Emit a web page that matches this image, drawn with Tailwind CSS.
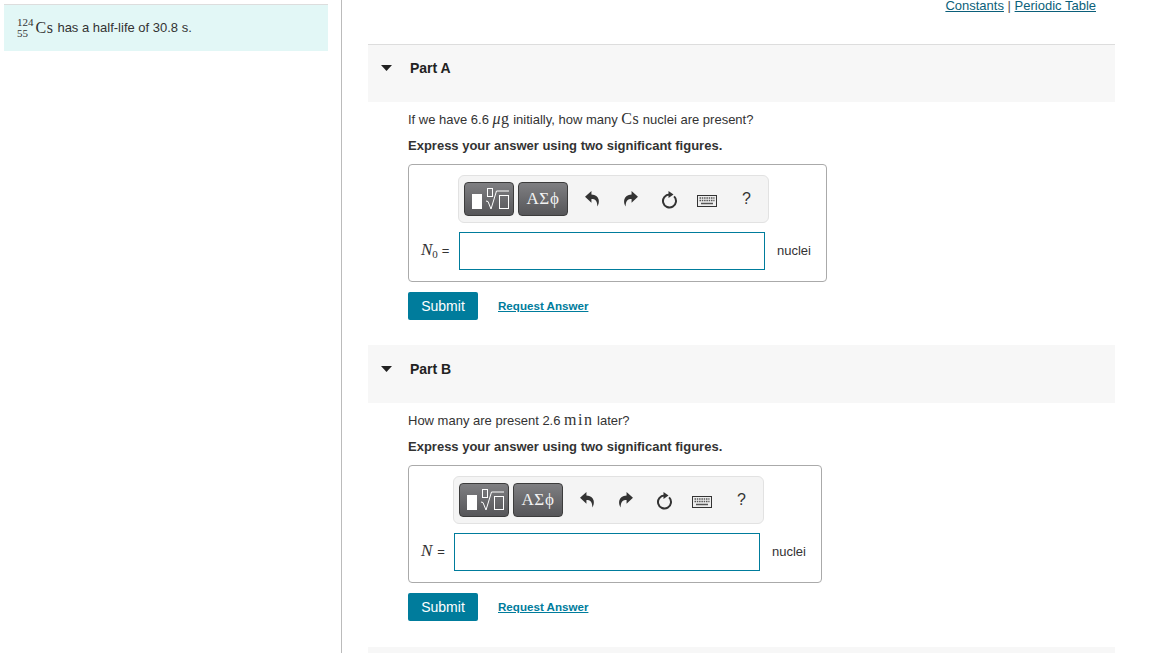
<!DOCTYPE html>
<html>
<head>
<meta charset="utf-8">
<script src="https://cdn.jsdelivr.net/npm/@tailwindcss/browser@4"></script>
</head>
<body class="bg-white">
<div class="flex h-[653px] w-[1166px] overflow-hidden bg-white font-['Liberation_Sans',Arial,sans-serif] text-[13px] text-[#333]">
  <aside class="w-[342px] shrink-0 border-r border-[#bbb] pt-[4px] pl-[4px]">
    <div class="flex h-[47px] w-[324px] items-center border-t border-[#ddd] bg-[#e2f7f6] pl-[13px]">
      <span class="mr-[2px] inline-flex flex-col items-start font-['Liberation_Serif',serif] text-[11px] leading-[11px] text-[#333]"><span>124</span><span>55</span></span>
      <span class="font-['Liberation_Serif',serif] text-[16px] tracking-[.5px]">Cs</span><span class="ml-[4px]">has a half-life of 30.8 s.</span>
    </div>
  </aside>
  <main class="w-[773px] shrink-0 pl-[26px]">
    <div class="flex h-[44px] w-[747px] items-start justify-end pr-[19px]">
      <div class="leading-[11px]"><a class="text-[#0b5f7a] underline">Constants</a> <span class="text-[#555]">|</span> <a class="text-[#0b5f7a] underline">Periodic Table</a></div>
    </div>

    <section>
      <div class="h-[58px] w-[747px] border-t border-[#ddd] bg-[#f7f7f7]">
        <div class="flex h-[46px] items-center pl-[13px]">
          <svg class="mr-[18px] -mt-[1px]" width="11" height="6" viewBox="0 0 11 6"><path d="M0 0H11L5.500 6Z" fill="#222"/></svg>
          <span class="text-[14px] font-bold text-[#222]">Part A</span>
        </div>
      </div>
      <div class="pl-[40px]">
        <p class="mt-[9px] h-[17px] leading-[16px]">If we have 6.6 <span class="font-['Liberation_Serif',serif] text-[16px] leading-[16px] tracking-[.5px]"><i>μ</i>g</span> initially, how many <span class="font-['Liberation_Serif',serif] text-[16px] leading-[16px] tracking-[.5px]">Cs</span> nuclei are present?</p>
        <p class="mt-[9px] h-[18px] font-bold leading-[18px]">Express your answer using two significant figures.</p>
        <div class="mt-[9px] h-[118px] w-[419px] rounded-[4px] border border-[#aaa] pt-[10px]">
          <div class="ml-[49px] flex h-[48px] w-[311px] items-center rounded-[6px] border border-[#e2e2e2] bg-[#f4f4f4] pl-[5px]">
            <button class="flex h-[34px] w-[50px] items-center rounded-[4px] border border-[#3c3c3c] bg-gradient-to-b from-[#7f7f82] to-[#565659] pl-[7px]">
              <svg width="38" height="28" viewBox="0 0 38 28"><rect x="0" y="9" width="10" height="15" fill="#fff"/><rect x="15.500" y="3.500" width="5" height="8" fill="none" stroke="#fff"/><path d="M14 16l2 .5 3 7.500 5.500-18H37" fill="none" stroke="#fff" stroke-width="1"/><rect x="27.500" y="10.500" width="9" height="13" fill="none" stroke="#fff"/></svg>
            </button>
            <button class="ml-[4px] h-[34px] w-[50px] rounded-[4px] border border-[#3c3c3c] bg-gradient-to-b from-[#7f7f82] to-[#565659] font-['Liberation_Serif',serif] text-[17px] leading-[30px] tracking-[.7px] text-[#f2f2f2]">ΑΣϕ</button>
            <svg class="ml-[17px]" width="15" height="16" viewBox="0 0 14 15"><path d="M6 0L0 5.500 6 11V7.600c3.600 0 5.400 1.600 5.600 6.900C14 10.500 14 4 6 3.300Z" fill="#333"/></svg>
            <svg class="ml-[23px]" width="15" height="16" viewBox="0 0 14 15"><path d="M8 0L14 5.500 8 11V7.600C4.400 7.600 2.600 9.200 2.400 14.500 0 10.500 0 4 8 3.300Z" fill="#333"/></svg>
            <svg class="ml-[23px] mt-[1px]" width="17" height="18" viewBox="0 0 17 18"><path d="M8.500 3.500A6.500 6.500 0 1 0 13.100 5.400" fill="none" stroke="#333" stroke-width="2"/><path d="M7.500 0L12.500 3.500 7.500 7Z" fill="#333"/></svg>
            <svg class="ml-[19px] mt-[3px]" width="20" height="12" viewBox="0 0 20 12"><rect x=".5" y=".5" width="19" height="11" fill="#eee" stroke="#333"/><path d="M2.500 3h15M2.500 5.500h15" stroke="#555" stroke-width="1.300" stroke-dasharray="1.500 .8"/><path d="M4 8.500h12" stroke="#555" stroke-width="1.500"/></svg>
            <span class="ml-[25px] text-[16px] text-[#333]">?</span>
          </div>
          <div class="mt-[9px] flex h-[38px] items-center pl-[12px]">
            <span class="w-[38px] shrink-0 whitespace-nowrap"><span class="font-['Liberation_Serif',serif] text-[17px] leading-[18px]"><i>N</i><sub class="text-[11px]">0</sub></span><span class="ml-[4px]">=</span></span>
            <div class="h-[38px] w-[306px] shrink-0 border border-[#007c9c] bg-white"></div>
            <span class="ml-[12px]">nuclei</span>
          </div>
        </div>
        <div class="mt-[10px] flex items-center">
          <button class="h-[28px] w-[70px] rounded-[2px] bg-[#007c9c] text-[14px] text-white">Submit</button>
          <a class="ml-[20px] text-[11.6px] font-bold text-[#007c9c] underline">Request Answer</a>
        </div>
      </div>
    </section>

    <section class="mt-[25px]">
      <div class="h-[58px] w-[747px] border-t border-[#f7f7f7] bg-[#f7f7f7]">
        <div class="flex h-[46px] items-center pl-[13px]">
          <svg class="mr-[18px] -mt-[1px]" width="11" height="6" viewBox="0 0 11 6"><path d="M0 0H11L5.500 6Z" fill="#222"/></svg>
          <span class="text-[14px] font-bold text-[#222]">Part B</span>
        </div>
      </div>
      <div class="pl-[40px]">
        <p class="mt-[9px] h-[17px] leading-[16px]">How many are present 2.6 <span class="font-['Liberation_Serif',serif] text-[16px] leading-[16px] tracking-[1.5px]">min</span> later?</p>
        <p class="mt-[9px] h-[18px] font-bold leading-[18px]">Express your answer using two significant figures.</p>
        <div class="mt-[9px] h-[118px] w-[414px] rounded-[4px] border border-[#aaa] pt-[10px]">
          <div class="ml-[44px] flex h-[48px] w-[311px] items-center rounded-[6px] border border-[#e2e2e2] bg-[#f4f4f4] pl-[5px]">
            <button class="flex h-[34px] w-[50px] items-center rounded-[4px] border border-[#3c3c3c] bg-gradient-to-b from-[#7f7f82] to-[#565659] pl-[7px]">
              <svg width="38" height="28" viewBox="0 0 38 28"><rect x="0" y="9" width="10" height="15" fill="#fff"/><rect x="15.500" y="3.500" width="5" height="8" fill="none" stroke="#fff"/><path d="M14 16l2 .5 3 7.500 5.500-18H37" fill="none" stroke="#fff" stroke-width="1"/><rect x="27.500" y="10.500" width="9" height="13" fill="none" stroke="#fff"/></svg>
            </button>
            <button class="ml-[4px] h-[34px] w-[50px] rounded-[4px] border border-[#3c3c3c] bg-gradient-to-b from-[#7f7f82] to-[#565659] font-['Liberation_Serif',serif] text-[17px] leading-[30px] tracking-[.7px] text-[#f2f2f2]">ΑΣϕ</button>
            <svg class="ml-[17px]" width="15" height="16" viewBox="0 0 14 15"><path d="M6 0L0 5.500 6 11V7.600c3.600 0 5.400 1.600 5.600 6.900C14 10.500 14 4 6 3.300Z" fill="#333"/></svg>
            <svg class="ml-[23px]" width="15" height="16" viewBox="0 0 14 15"><path d="M8 0L14 5.500 8 11V7.600C4.400 7.600 2.600 9.200 2.400 14.500 0 10.500 0 4 8 3.300Z" fill="#333"/></svg>
            <svg class="ml-[23px] mt-[1px]" width="17" height="18" viewBox="0 0 17 18"><path d="M8.500 3.500A6.500 6.500 0 1 0 13.100 5.400" fill="none" stroke="#333" stroke-width="2"/><path d="M7.500 0L12.500 3.500 7.500 7Z" fill="#333"/></svg>
            <svg class="ml-[19px] mt-[3px]" width="20" height="12" viewBox="0 0 20 12"><rect x=".5" y=".5" width="19" height="11" fill="#eee" stroke="#333"/><path d="M2.500 3h15M2.500 5.500h15" stroke="#555" stroke-width="1.300" stroke-dasharray="1.500 .8"/><path d="M4 8.500h12" stroke="#555" stroke-width="1.500"/></svg>
            <span class="ml-[25px] text-[16px] text-[#333]">?</span>
          </div>
          <div class="mt-[9px] flex h-[38px] items-center pl-[12px]">
            <span class="w-[33px] shrink-0 whitespace-nowrap"><span class="font-['Liberation_Serif',serif] text-[17px] leading-[18px]"><i>N</i></span><span class="ml-[5px]">=</span></span>
            <div class="h-[38px] w-[306px] shrink-0 border border-[#007c9c] bg-white"></div>
            <span class="ml-[12px]">nuclei</span>
          </div>
        </div>
        <div class="mt-[10px] flex items-center">
          <button class="h-[28px] w-[70px] rounded-[2px] bg-[#007c9c] text-[14px] text-white">Submit</button>
          <a class="ml-[20px] text-[11.6px] font-bold text-[#007c9c] underline">Request Answer</a>
        </div>
      </div>
    </section>

    <div class="mt-[26px] h-[20px] w-[747px] bg-[#f7f7f7]"></div>
  </main>
</div>
</body>
</html>
